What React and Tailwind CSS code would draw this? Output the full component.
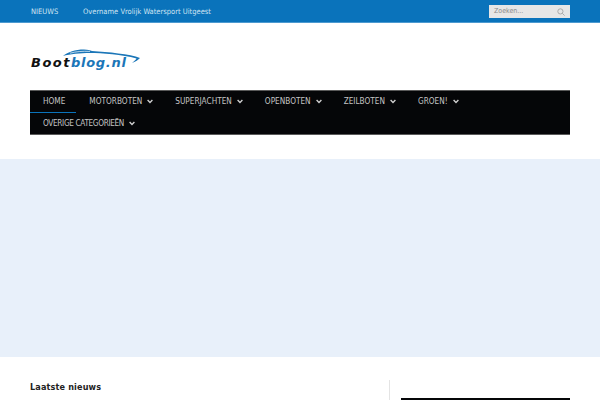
import React from 'react';

const NAV_ROW_1 = [
  { label: 'HOME', active: true },
  { label: 'MOTORBOTEN', caret: true },
  { label: 'SUPERJACHTEN', caret: true },
  { label: 'OPENBOTEN', caret: true },
  { label: 'ZEILBOTEN', caret: true },
  { label: 'GROEN!', caret: true },
];

function Caret() {
  return (
    <svg width="6" height="5" viewBox="0 0 6 5" className="ml-[5px]" fill="none" stroke="#d0d0d0" strokeWidth="1.4">
      <path d="M0.6 1 L3 3.4 L5.4 1" />
    </svg>
  );
}

function NavItem({ label, caret, active, tight }) {
  return (
    <div className={`h-[22px] flex items-center pl-[13px] ${active ? 'pr-[11px]' : 'pr-[9px]'} border-b ${active ? 'border-[#0a73bb]' : 'border-transparent'}`}>
      <span className={`text-[8.2px] text-[#c4c4c4] leading-none whitespace-nowrap ${tight ? 'tracking-[-0.35px]' : ''}`}>{label}</span>
      {caret && <Caret />}
    </div>
  );
}

export default function App() {
  return (
    <div className="w-[600px] h-[400px] overflow-hidden bg-white font-['DejaVu_Sans',sans-serif] font-stretch-condensed">
      {/* top bar */}
      <div className="h-[23px] bg-[#0a73bb] border-b border-[#4d9ad0] flex items-center pl-[31px] pr-[30px]">
        <span className="text-[7.5px] text-[#cfe3f2] w-[52px] mt-[1px]">NIEUWS</span>
        <span className="text-[7.5px] text-[#cfe3f2] whitespace-nowrap mt-[1px]">Overname Vrolijk Watersport Uitgeest</span>
        <div className="ml-auto w-[81px] h-[13px] bg-[#e6e6e6] flex items-center justify-between pl-[5px] pr-[5px]">
          <span className="text-[7px] text-[#8a8a8a] leading-none">Zoeken...</span>
          <svg width="8" height="8" viewBox="0 0 8 8" fill="none" stroke="#a5a5a5" strokeWidth="0.9" className="mt-[2px]">
            <circle cx="3.4" cy="3.4" r="2.6" />
            <path d="M5.3 5.3 L7.6 7.6" />
          </svg>
        </div>
      </div>

      {/* logo */}
      <div className="h-[67px] pl-[30px] pt-[24px]">
        <div className="relative w-[112px] h-[24px]">
          <svg width="112" height="24" viewBox="0 0 112 24" fill="none" className="absolute left-0 top-0">
            <path d="M33 9 C38 5 45 2.5 54 2.5 C58 2.5 60 3.5 62 4 C78 5 100 7 110 11 C108 13 105 15 102 16 C104 14 106 13 106.5 11.5 C92 7.5 72 6 60 6 C50 6 40 7 33 9 Z" fill="#1b76b8" />
            <path d="M40 6.2 C46 4.6 52 4 60 4.4" stroke="#ffffff" strokeWidth="0.7" />
          </svg>
          <div className="absolute left-[1px] top-[9px] leading-none italic font-bold text-[13px] whitespace-nowrap font-stretch-normal">
            <span className="text-[#111] tracking-[1.5px]">Boot</span>
            <span className="text-[#1b76b8] tracking-[0.7px]">blog.nl</span>
          </div>
        </div>
      </div>

      {/* nav */}
      <div className="ml-[30px] w-[540px] h-[45px] bg-[#050608] border-t border-b border-[#5a5a5a]">
        <div className="flex">
          {NAV_ROW_1.map(item => (
            <NavItem key={item.label} {...item} />
          ))}
        </div>
        <div className="flex">
          <NavItem label="OVERIGE CATEGORIEËN" caret tight />
        </div>
      </div>

      {/* banner */}
      <div className="mt-[24px] h-[198px] bg-[#e8f0fa]" />

      {/* content */}
      <div className="flex pl-[30px] pr-[30px]">
        <div className="w-[359px] pt-[26px]">
          <h2 className="text-[9px] font-bold text-[#222] leading-none tracking-[0.15px]">Laatste nieuws</h2>
        </div>
        <div className="mt-[23px] w-px h-[20px] bg-[#e4e4e4]" />
        <div className="ml-[11px] w-[169px] mt-[41px] h-[2px] bg-[#050608]" />
      </div>
    </div>
  );
}
